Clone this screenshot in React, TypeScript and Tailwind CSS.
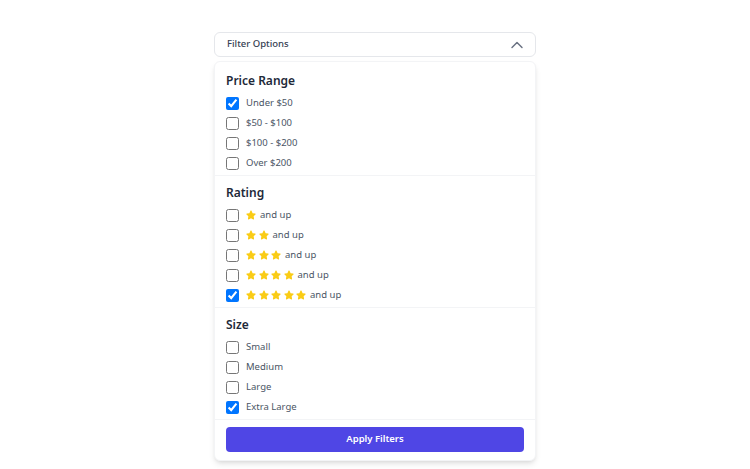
import { ChevronUp } from "lucide-react";
import { FaStar } from "react-icons/fa";

interface Option {
    label: string;
    stars?: number;
    checked?: boolean;
}

interface Section {
    title: string;
    options: Option[];
}

const sections: Section[] = [
    {
        title: "Price Range",
        options: [
            { label: "Under $50", checked: true },
            { label: "$50 - $100" },
            { label: "$100 - $200" },
            { label: "Over $200" },
        ],
    },
    {
        title: "Rating",
        options: [
            { label: "and up", stars: 1 },
            { label: "and up", stars: 2 },
            { label: "and up", stars: 3 },
            { label: "and up", stars: 4 },
            { label: "and up", stars: 5, checked: true },
        ],
    },
    {
        title: "Size",
        options: [
            { label: "Small" },
            { label: "Medium" },
            { label: "Large" },
            { label: "Extra Large", checked: true },
        ],
    },
];

function FilterRow({ option }: { option: Option }) {
    return (
        <label className="flex h-[20px] items-center gap-[7px] text-[9.5px] text-gray-600">
            <input
                type="checkbox"
                defaultChecked={option.checked}
                className="m-0 h-[13px] w-[13px] shrink-0"
            />
            {option.stars ? (
                <span className="flex items-center gap-[4px]">
                    <span className="flex items-center gap-[2.5px] text-[#facc15]">
                        {Array.from({ length: option.stars }).map((_, i) => (
                            <FaStar key={i} className="h-[10px] w-[10px]" />
                        ))}
                    </span>
                    <span>{option.label}</span>
                </span>
            ) : (
                <span>{option.label}</span>
            )}
        </label>
    );
}

export default function App() {
    return (
        <div className="min-h-screen bg-white pt-8" style={{ fontFamily: '"Noto Sans", sans-serif' }}>
            <div className="mx-auto w-[322px]">
                {/* Toggle header */}
                <button className="flex h-[25px] w-full items-center justify-between rounded-md border border-gray-200 bg-white pl-3 pr-2 text-[9.5px] font-medium text-gray-700">
                    <span>Filter Options</span>
                    <ChevronUp className="h-5 w-5 text-gray-500" strokeWidth={1.75} />
                </button>

                {/* Dropdown panel */}
                <div className="mt-1 overflow-hidden rounded-md border border-gray-100 bg-white shadow-md">
                    {sections.map((section, idx) => (
                        <div
                            key={section.title}
                            className={`px-[11px] pb-[2px] ${idx === 0 ? "pt-[10px]" : "border-t border-gray-100 pt-[8px]"}`}
                        >
                            <h3 className="mb-[3px] text-[12px] font-semibold leading-[18px] text-gray-800">
                                {section.title}
                            </h3>
                            {section.options.map((option, i) => (
                                <FilterRow key={i} option={option} />
                            ))}
                        </div>
                    ))}
                    <div className="border-t border-gray-100 px-[11px] pb-[8px] pt-[4px]">
                        <button className="h-[25px] w-full rounded-[4px] bg-[#4f46e5] text-[9.5px] font-semibold text-white">
                            Apply Filters
                        </button>
                    </div>
                </div>
            </div>
        </div>
    );
}
